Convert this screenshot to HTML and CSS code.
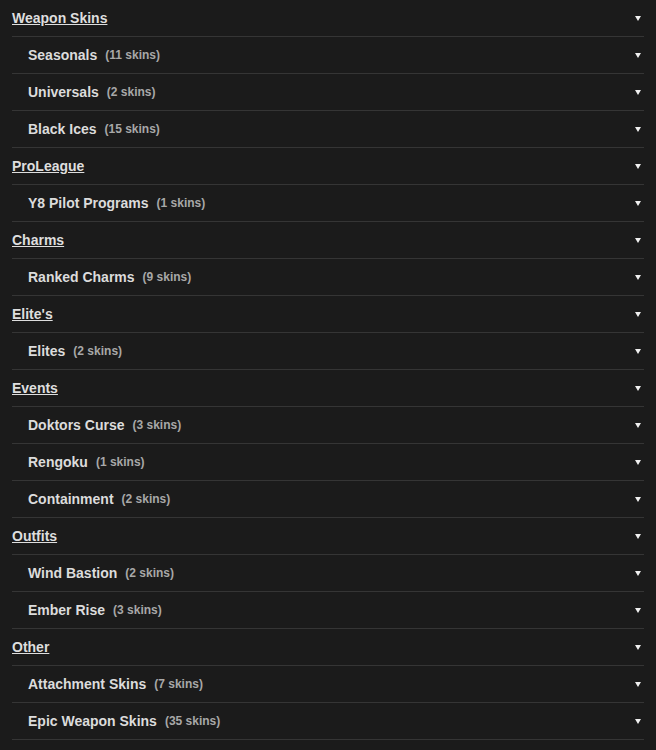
FILE: index.html
```html
<!DOCTYPE html>
<html>
<head>
<meta charset="utf-8">
<link rel="stylesheet" href="styles.css">
</head>
<body>
<div class="list">
  <div class="row head"><span class="title">Weapon Skins</span><span class="arrow"></span></div>
  <div class="row sub"><span class="name">Seasonals</span><span class="count">(11 skins)</span><span class="arrow"></span></div>
  <div class="row sub"><span class="name">Universals</span><span class="count">(2 skins)</span><span class="arrow"></span></div>
  <div class="row sub"><span class="name">Black Ices</span><span class="count">(15 skins)</span><span class="arrow"></span></div>
  <div class="row head"><span class="title">ProLeague</span><span class="arrow"></span></div>
  <div class="row sub"><span class="name">Y8 Pilot Programs</span><span class="count">(1 skins)</span><span class="arrow"></span></div>
  <div class="row head"><span class="title">Charms</span><span class="arrow"></span></div>
  <div class="row sub"><span class="name">Ranked Charms</span><span class="count">(9 skins)</span><span class="arrow"></span></div>
  <div class="row head"><span class="title">Elite's</span><span class="arrow"></span></div>
  <div class="row sub"><span class="name">Elites</span><span class="count">(2 skins)</span><span class="arrow"></span></div>
  <div class="row head"><span class="title">Events</span><span class="arrow"></span></div>
  <div class="row sub"><span class="name">Doktors Curse</span><span class="count">(3 skins)</span><span class="arrow"></span></div>
  <div class="row sub"><span class="name">Rengoku</span><span class="count">(1 skins)</span><span class="arrow"></span></div>
  <div class="row sub"><span class="name">Containment</span><span class="count">(2 skins)</span><span class="arrow"></span></div>
  <div class="row head"><span class="title">Outfits</span><span class="arrow"></span></div>
  <div class="row sub"><span class="name">Wind Bastion</span><span class="count">(2 skins)</span><span class="arrow"></span></div>
  <div class="row sub"><span class="name">Ember Rise</span><span class="count">(3 skins)</span><span class="arrow"></span></div>
  <div class="row head"><span class="title">Other</span><span class="arrow"></span></div>
  <div class="row sub"><span class="name">Attachment Skins</span><span class="count">(7 skins)</span><span class="arrow"></span></div>
  <div class="row sub"><span class="name">Epic Weapon Skins</span><span class="count">(35 skins)</span><span class="arrow"></span></div>
</div>
</body>
</html>
```
FILE: styles.css
```css
html, body {
  margin: 0;
  padding: 0;
  background: #1b1b1b;
  height: 100%;
}
body {
  font-family: "Liberation Sans", Arial, sans-serif;
  color: #dcdcdc;
}
.list {
  padding: 0 12px;
}
.row {
  display: flex;
  align-items: center;
  height: 36px;
  border-bottom: 1px solid #353535;
}
.title {
  font-size: 14px;
  font-weight: bold;
  text-decoration: underline;
  color: #dedede;
}
.sub {
  padding-left: 16px;
}
.name {
  font-size: 14px;
  font-weight: bold;
  color: #dcdcdc;
}
.count {
  margin-left: 8px;
  font-size: 12px;
  font-weight: bold;
  color: #a8a8a8;
}
.arrow {
  margin-left: auto;
  margin-right: 3px;
  width: 0;
  height: 0;
  border-left: 3px solid transparent;
  border-right: 3px solid transparent;
  border-top: 5px solid #f0f0f0;
  margin-top: 1px;
}
```
